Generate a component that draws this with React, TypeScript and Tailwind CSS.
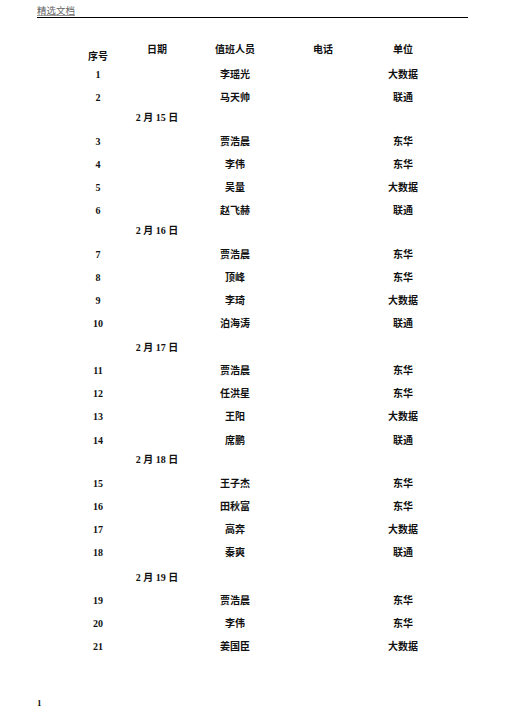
import React from 'react';

type Row =
  | { kind: 'person'; no: number; name: string; unit: string; h: number }
  | { kind: 'date'; label: string; h: number };

// 行高写死成完整类名，Tailwind 才能生成
const heightClass: Record<number, string> = {
  19: 'h-[19px]',
  20: 'h-[20px]',
  23: 'h-[23px]',
  24: 'h-[24px]',
  25: 'h-[25px]',
};

const rows: Row[] = [
  { kind: 'person', no: 1, name: '李瑶光', unit: '大数据', h: 23 },
  { kind: 'person', no: 2, name: '马天帅', unit: '联通', h: 20 },
  { kind: 'date', label: '2 月 15 日', h: 24 },
  { kind: 'person', no: 3, name: '贾浩晨', unit: '东华', h: 23 },
  { kind: 'person', no: 4, name: '李伟', unit: '东华', h: 23 },
  { kind: 'person', no: 5, name: '吴量', unit: '大数据', h: 23 },
  { kind: 'person', no: 6, name: '赵飞赫', unit: '联通', h: 20 },
  { kind: 'date', label: '2 月 16 日', h: 24 },
  { kind: 'person', no: 7, name: '贾浩晨', unit: '东华', h: 23 },
  { kind: 'person', no: 8, name: '顶峰', unit: '东华', h: 23 },
  { kind: 'person', no: 9, name: '李琦', unit: '大数据', h: 23 },
  { kind: 'person', no: 10, name: '泊海涛', unit: '联通', h: 24 },
  { kind: 'date', label: '2 月 17 日', h: 23 },
  { kind: 'person', no: 11, name: '贾浩晨', unit: '东华', h: 23 },
  { kind: 'person', no: 12, name: '任洪星', unit: '东华', h: 23 },
  { kind: 'person', no: 13, name: '王阳', unit: '大数据', h: 24 },
  { kind: 'person', no: 14, name: '席鹏', unit: '联通', h: 19 },
  { kind: 'date', label: '2 月 18 日', h: 24 },
  { kind: 'person', no: 15, name: '王子杰', unit: '东华', h: 23 },
  { kind: 'person', no: 16, name: '田秋富', unit: '东华', h: 23 },
  { kind: 'person', no: 17, name: '高奔', unit: '大数据', h: 23 },
  { kind: 'person', no: 18, name: '秦爽', unit: '联通', h: 25 },
  { kind: 'date', label: '2 月 19 日', h: 23 },
  { kind: 'person', no: 19, name: '贾浩晨', unit: '东华', h: 23 },
  { kind: 'person', no: 20, name: '李伟', unit: '东华', h: 23 },
  { kind: 'person', no: 21, name: '姜国臣', unit: '大数据', h: 23 },
];

const grid = 'grid grid-cols-[56px_62px_94px_82px_78px] text-center';

export default function App() {
  return (
    <div
      className="h-[714px] w-[505px] bg-white flex flex-col text-[#111] font-bold text-[10px] leading-[23px]"
      style={{ fontFamily: '"Liberation Serif", "Noto Sans CJK SC", serif' }}
    >
      {/* 页眉 */}
      <div className="mx-[37px] mt-[6px] border-b border-black pb-[1px] leading-[10px]">
        <span className="text-[9.5px] font-normal text-[#666] underline decoration-[#999]">精选文档</span>
      </div>

      {/* 值班表 */}
      <div className="pl-[70px] pt-[20px]">
        <div className={`${grid} h-[25px]`}>
          <div className="pt-[7px]">序号</div>
          <div>日期</div>
          <div>值班人员</div>
          <div>电话</div>
          <div>单位</div>
        </div>

        {rows.map((r, i) =>
          r.kind === 'person' ? (
            <div key={i} className={`${grid} ${heightClass[r.h]}`}>
              <div>{r.no}</div>
              <div />
              <div>{r.name}</div>
              <div />
              <div>{r.unit}</div>
            </div>
          ) : (
            <div key={i} className={`${grid} ${heightClass[r.h]}`}>
              <div />
              <div className="whitespace-nowrap">{r.label}</div>
            </div>
          )
        )}
      </div>

      {/* 页码 */}
      <div className="mt-auto pl-[37px] pb-[5px] leading-[12px] text-[9px]">1</div>
    </div>
  );
}
